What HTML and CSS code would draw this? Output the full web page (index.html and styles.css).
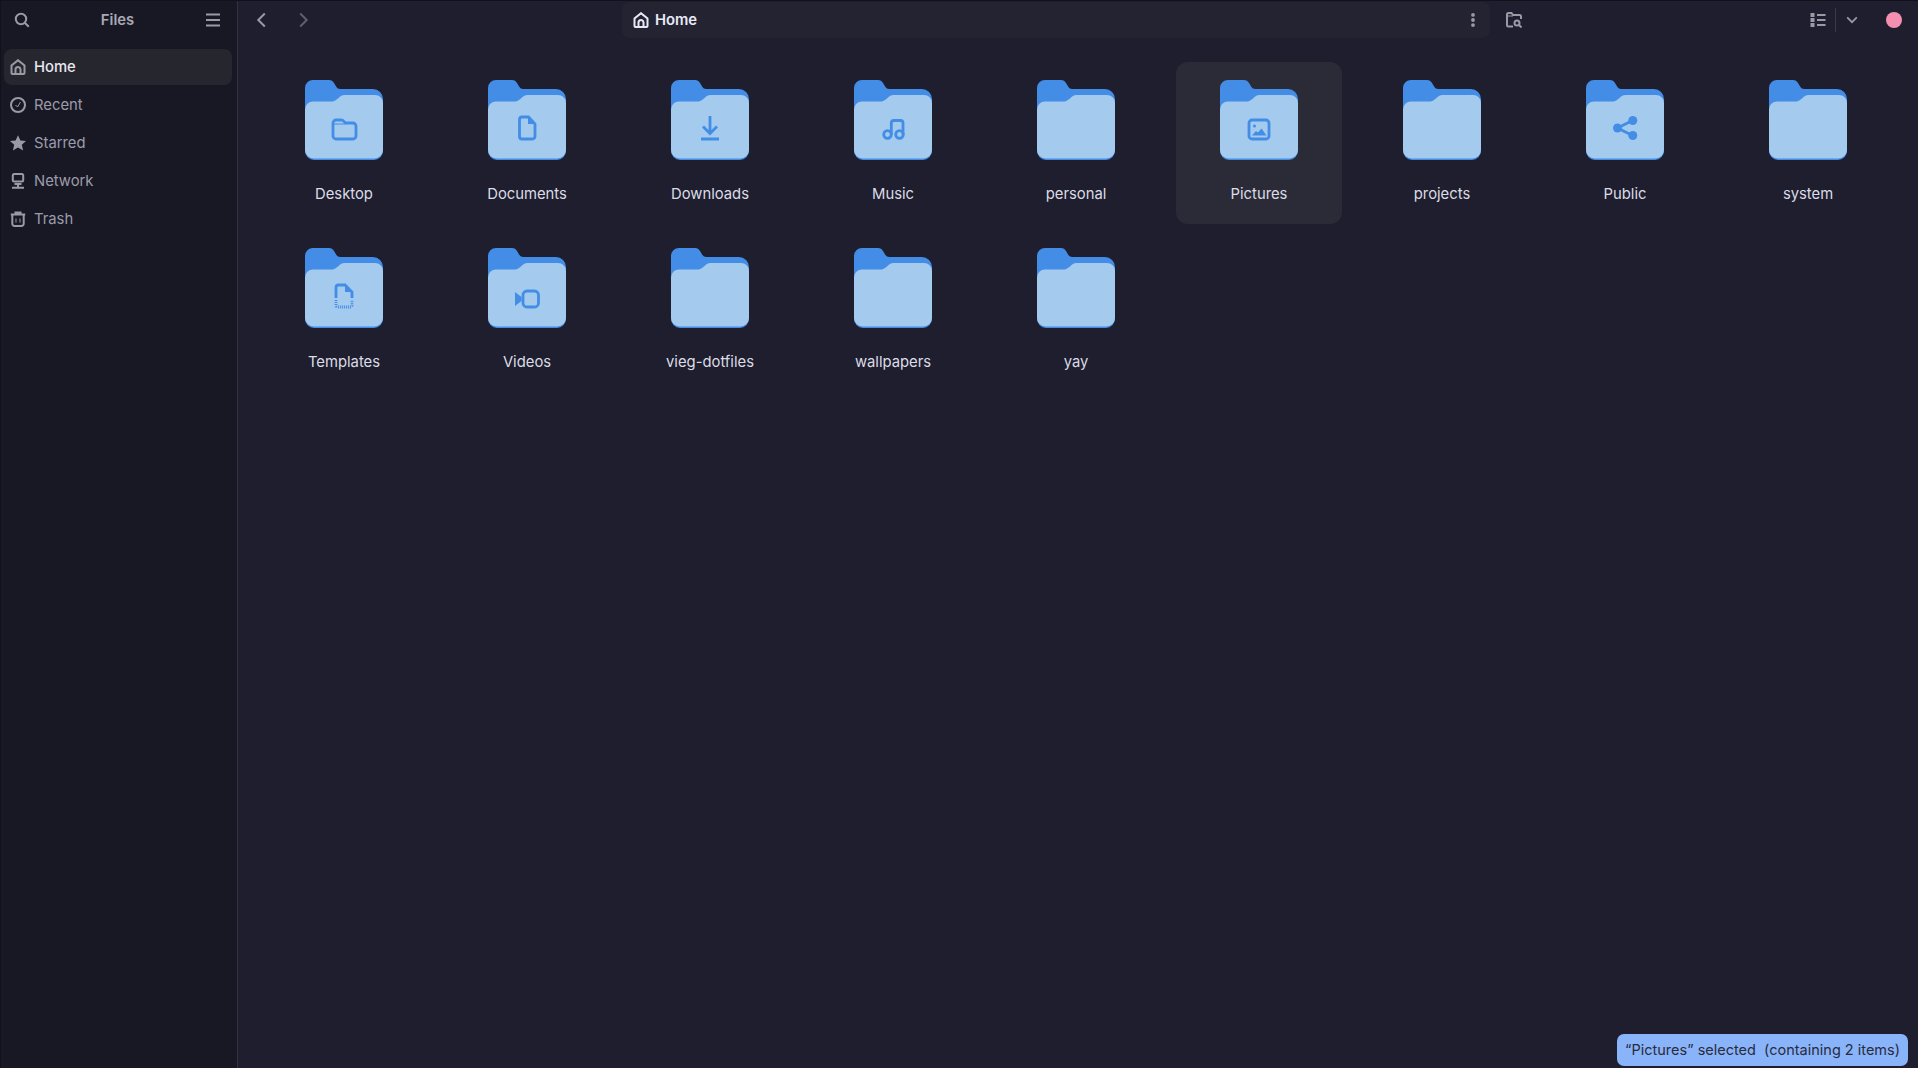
FILE: index.html
```html
<!DOCTYPE html>
<html lang="en">
<head>
    <meta charset="UTF-8">
    <title>Files</title>
    <link rel="stylesheet" href="styles.css">
</head>
<body>

    <svg class="defs" width="0" height="0">
        <symbol id="folder" viewBox="0 0 78 80">
            <path fill="#438de6" d="M8 0h16c2.500 0 3.800 1 5 3l1.500 2.500C31.800 8 33 9 35.500 9H68a10 10 0 0 1 10 10v52a9 9 0 0 1-9 9H9a9 9 0 0 1-9-9V8a8 8 0 0 1 8-8z"/>
            <path fill="#a4caee" d="M0 29.500a8 8 0 0 1 8-8h18c2.500 0 4-.6 6-2.300l1.500-1.200c2-1.700 3.500-3 6-3H70a8 8 0 0 1 8 8V70a8.500 8.500 0 0 1-8.500 8.500H8.500A8.500 8.500 0 0 1 0 70z"/>
        </symbol>
    </svg>

    <div class="app">

        <!-- Sidebar -->
        <aside class="sidebar">
            <div class="sidebar-header">
                <svg class="icon" viewBox="0 0 16 16"><circle cx="7" cy="7" r="5.200"/><path d="M10.800 10.800l4 4"/></svg>
                <span class="sidebar-title">Files</span>
                <svg class="icon" viewBox="0 0 16 16"><path d="M1 2.500h14M1 8h14M1 13.500h14"/></svg>
            </div>
            <nav class="places">
                <a class="place active">
                    <svg class="icon" viewBox="0 0 16 16"><path d="M1.500 14V6.500L8 1.200l6.500 5.300V14a1 1 0 0 1-1 1h-11a1 1 0 0 1-1-1z"/><path d="M5.500 15v-4.500a2.500 2.500 0 0 1 5 0V15"/></svg>
                    Home
                </a>
                <a class="place">
                    <svg class="icon" viewBox="0 0 16 16"><circle cx="8" cy="8" r="7"/><path class="thin" d="M5.500 8l2 2 3-5"/></svg>
                    Recent
                </a>
                <a class="place">
                    <svg class="icon" viewBox="0 0 16 16"><path class="solid" d="M8 .2l2.400 5.200 5.600.6-4.200 3.800 1.300 5.700L8 12.600l-5.100 2.900 1.300-5.700L0 6l5.600-.6z"/></svg>
                    Starred
                </a>
                <a class="place">
                    <svg class="icon" viewBox="0 0 16 16"><rect x="2.800" y="1" width="10.400" height="7.500" rx="1.500"/><path d="M4.500 11h7M8 11v3.500M2 14.800h12"/></svg>
                    Network
                </a>
                <a class="place">
                    <svg class="icon" viewBox="0 0 16 16"><path d="M.8 3.500h14.400M5.500 3.500V1.500h5v2"/><path d="M2.300 3.500v9.200A2.300 2.300 0 0 0 4.600 15h6.800a2.300 2.300 0 0 0 2.300-2.300V3.500"/><path class="thin" d="M6 7.500v4M10 7.500v4"/></svg>
                    Trash
                </a>
            </nav>
        </aside>

        <main class="content">

            <!-- Barra superior -->
            <header class="toolbar">
                <div class="nav-buttons">
                    <svg class="icon" viewBox="0 0 16 16"><path d="M10.800 1.500L4.300 8l6.500 6.500"/></svg>
                    <svg class="icon dim" viewBox="0 0 16 16"><path d="M5.200 1.500L11.700 8l-6.500 6.500"/></svg>
                </div>
                <div class="pathbar">
                    <svg class="icon light" viewBox="0 0 16 16"><path d="M1.500 14V6.500L8 1.200l6.500 5.300V14a1 1 0 0 1-1 1h-11a1 1 0 0 1-1-1z"/><path d="M5.500 15v-4.500a2.500 2.500 0 0 1 5 0V15"/></svg>
                    <span class="path-name">Home</span>
                    <svg class="icon kebab" viewBox="0 0 16 16"><path class="solid" d="M8 1a1.900 1.900 0 1 1 0 3.800A1.900 1.900 0 0 1 8 1zM8 6.100a1.900 1.900 0 1 1 0 3.800 1.900 1.900 0 0 1 0-3.800zM8 11.200a1.900 1.900 0 1 1 0 3.800 1.900 1.900 0 0 1 0-3.800z"/></svg>
                </div>
                <svg class="icon search-folder" viewBox="0 0 16 16"><path d="M7 14.500H2.500A1.500 1.500 0 0 1 1 13V2.500A1.500 1.500 0 0 1 2.500 1h3L7 3h6.500A1.500 1.500 0 0 1 15 4.500V7"/><path class="thin" d="M1 4h6"/><circle cx="11" cy="11" r="2.500"/><path d="M13 13l2.500 2.500"/></svg>
                <div class="view-buttons">
                    <svg class="icon" viewBox="0 0 16 16"><path class="solid" d="M.5 1h4v4h-4zM.5 6h4v4h-4zM.5 11h4v4h-4z"/><path d="M7 3h8.500M7 8h8.500M7 13h8.500"/></svg>
                    <span class="divider"></span>
                    <svg class="icon small" viewBox="0 0 16 16"><path d="M2.500 5l5.500 5.500L13.500 5"/></svg>
                </div>
                <span class="dot"></span>
            </header>

            <!-- Grade de pastas -->
            <section class="grid">
                <div class="item">
                    <svg class="folder" viewBox="0 0 78 80"><use href="#folder"/><path class="glyph" d="M31 40h5.500c1.500 0 2 .6 3 2l1 1H48a3 3 0 0 1 3 3v10a3 3 0 0 1-3 3H31a3 3 0 0 1-3-3V43a3 3 0 0 1 3-3z"/><path class="glyph-thin" d="M28 44h12"/></svg>
                    <span>Desktop</span>
                </div>
                <div class="item">
                    <svg class="folder" viewBox="0 0 78 80"><use href="#folder"/><path class="glyph" d="M34 37h6.500l6.500 7v12.500a2.500 2.500 0 0 1-2.500 2.500H34a2.500 2.500 0 0 1-2.500-2.500v-17A2.500 2.500 0 0 1 34 37z"/><path class="glyph-fill" d="M40 37l7 7h-7z"/></svg>
                    <span>Documents</span>
                </div>
                <div class="item">
                    <svg class="folder" viewBox="0 0 78 80"><use href="#folder"/><path class="glyph" d="M39 36v17M32 46.500l7 7 7-7M30 59h18"/></svg>
                    <span>Downloads</span>
                </div>
                <div class="item">
                    <svg class="folder" viewBox="0 0 78 80"><use href="#folder"/><circle class="glyph" cx="33.500" cy="54.500" r="3.800"/><circle class="glyph" cx="45.500" cy="54.500" r="3.800"/><path class="glyph" d="M37.300 54.500V43a2.500 2.500 0 0 1 2.500-2.500h6.700a2.500 2.500 0 0 1 2.500 2.500v11.500"/></svg>
                    <span>Music</span>
                </div>
                <div class="item">
                    <svg class="folder" viewBox="0 0 78 80"><use href="#folder"/></svg>
                    <span>personal</span>
                </div>
                <div class="item selected">
                    <svg class="folder" viewBox="0 0 78 80"><use href="#folder"/><rect class="glyph" x="29" y="40" width="20" height="19" rx="3"/><circle class="glyph-fill" cx="34.500" cy="46" r="1.500"/><path class="glyph-fill" d="M32 55.500l4-4.500 2 1.500 3.500-4 5 7z"/></svg>
                    <span>Pictures</span>
                </div>
                <div class="item">
                    <svg class="folder" viewBox="0 0 78 80"><use href="#folder"/></svg>
                    <span>projects</span>
                </div>
                <div class="item">
                    <svg class="folder" viewBox="0 0 78 80"><use href="#folder"/><path class="glyph" d="M46.500 40.500L31.500 48l15 7.500"/><circle class="glyph-fill" cx="31.500" cy="48" r="4.500"/><circle class="glyph-fill" cx="46.800" cy="40.500" r="4.500"/><circle class="glyph-fill" cx="46.800" cy="55.500" r="4.500"/></svg>
                    <span>Public</span>
                </div>
                <div class="item">
                    <svg class="folder" viewBox="0 0 78 80"><use href="#folder"/></svg>
                    <span>system</span>
                </div>
                <div class="item">
                    <svg class="folder" viewBox="0 0 78 80"><use href="#folder"/><path class="glyph" d="M31 50V39.500a2.500 2.500 0 0 1 2.500-2.500H40l7 7v6"/><path class="glyph-fill" d="M40 37l7 7h-7z"/><path class="glyph-dots" d="M31 52v5.500a1.500 1.500 0 0 0 1.500 1.500h13a1.500 1.500 0 0 0 1.500-1.500V52"/></svg>
                    <span>Templates</span>
                </div>
                <div class="item">
                    <svg class="folder" viewBox="0 0 78 80"><use href="#folder"/><rect class="glyph" x="35" y="43" width="15.500" height="16" rx="4"/><path class="glyph-fill" d="M27 44l6.500 5v4L27 58z"/></svg>
                    <span>Videos</span>
                </div>
                <div class="item">
                    <svg class="folder" viewBox="0 0 78 80"><use href="#folder"/></svg>
                    <span>vieg-dotfiles</span>
                </div>
                <div class="item">
                    <svg class="folder" viewBox="0 0 78 80"><use href="#folder"/></svg>
                    <span>wallpapers</span>
                </div>
                <div class="item">
                    <svg class="folder" viewBox="0 0 78 80"><use href="#folder"/></svg>
                    <span>yay</span>
                </div>
            </section>

            <div class="status">“Pictures” selected  (containing 2 items)</div>
        </main>
    </div>

</body>
</html>
```

FILE: styles.css
```css
/* Reset */
* {
    margin: 0;
    padding: 0;
    box-sizing: border-box;
}

html, body {
    height: 100%;
}

body {
    font-family: 'Inter', 'Noto Sans', sans-serif;
    font-size: 14.8px;
    background-color: #11111b;
    color: #cdd6f4;
    overflow: hidden;
}

.defs {
    position: absolute;
}

.app {
    display: flex;
    height: 100%;
    padding: 1px 0 0 1px;
}

/* Icons */
.icon {
    width: 16px;
    height: 16px;
    flex: none;
    fill: none;
    stroke: #9a9aa6;
    stroke-width: 2;
}

.icon .solid {
    fill: #9a9aa6;
    stroke: none;
}

.icon .thin {
    stroke-width: 1;
}

.icon.dim {
    stroke: #5f5f6e;
}

.icon.light {
    stroke: #e6e9f5;
}

.icon.small {
    width: 14px;
    height: 14px;
}

/* Sidebar */
.sidebar {
    width: 237px;
    flex: none;
    background-color: #181825;
    border-right: 1px solid #313244;
}

.sidebar-header {
    display: flex;
    align-items: center;
    justify-content: space-between;
    height: 38px;
    padding: 0 16px 0 13px;
}

.sidebar-title {
    font-weight: 600;
    color: #a8a8b4;
}

.places {
    display: flex;
    flex-direction: column;
    gap: 2px;
    padding: 10px 5px 0 3px;
}

.place {
    display: flex;
    align-items: center;
    gap: 8px;
    height: 36px;
    padding: 0 6px 1px 6px;
    border-radius: 8px;
    color: #9c9ca9;
}

.place.active {
    background-color: #26262f;
    color: #e8e8f0;
    font-weight: 500;
}

/* Toolbar */
.content {
    position: relative;
    flex: 1;
    min-width: 0;
    background-color: #1e1e2e;
}

.toolbar {
    display: flex;
    align-items: center;
    height: 38px;
}

.nav-buttons {
    display: flex;
    gap: 25px;
    padding-left: 16px;
    width: 384px;
}

.pathbar {
    display: flex;
    align-items: center;
    gap: 6px;
    width: 868px;
    height: 36px;
    padding: 0 11px;
    background-color: #232332;
    border-radius: 8px;
}

.path-name {
    font-weight: 600;
    color: #e8ebf7;
}

.kebab {
    margin-left: auto;
    margin-right: -2px;
}

.search-folder {
    margin-left: 16px;
}

.view-buttons {
    display: flex;
    align-items: center;
    margin-left: auto;
    gap: 9px;
}

.divider {
    width: 1px;
    height: 24px;
    background-color: #3a3a4a;
}

.dot {
    width: 16px;
    height: 16px;
    margin: 0 16px 0 27px;
    border-radius: 50%;
    background-color: #f48fb1;
}

/* Folder grid */
.grid {
    display: grid;
    grid-template-columns: repeat(9, 166px);
    column-gap: 17px;
    row-gap: 6px;
    padding: 23px 0 0 23px;
}

.item {
    display: flex;
    flex-direction: column;
    align-items: center;
    height: 162px;
    padding-top: 18px;
    border-radius: 12px;
    color: #dcdce6;
}

.item.selected {
    background-color: #2b2b38;
}

.item span {
    margin-top: 24px;
    line-height: 20px;
}

.folder {
    width: 78px;
    height: 80px;
}

.glyph {
    fill: none;
    stroke: #438de6;
    stroke-width: 2.800;
}

.glyph-thin {
    fill: none;
    stroke: #438de6;
    stroke-width: 1;
}

.glyph-fill {
    fill: #438de6;
}

.glyph-dots {
    fill: none;
    stroke: #438de6;
    stroke-width: 2.800;
    stroke-dasharray: 1 1;
}

/* Status */
.status {
    position: absolute;
    right: 10px;
    bottom: 2px;
    height: 32px;
    padding: 0 8px;
    font-size: 14.5px;
    line-height: 32px;
    white-space: pre;
    background-color: #89b4fa;
    color: #2a2b3d;
    border-radius: 7px;
}
```
